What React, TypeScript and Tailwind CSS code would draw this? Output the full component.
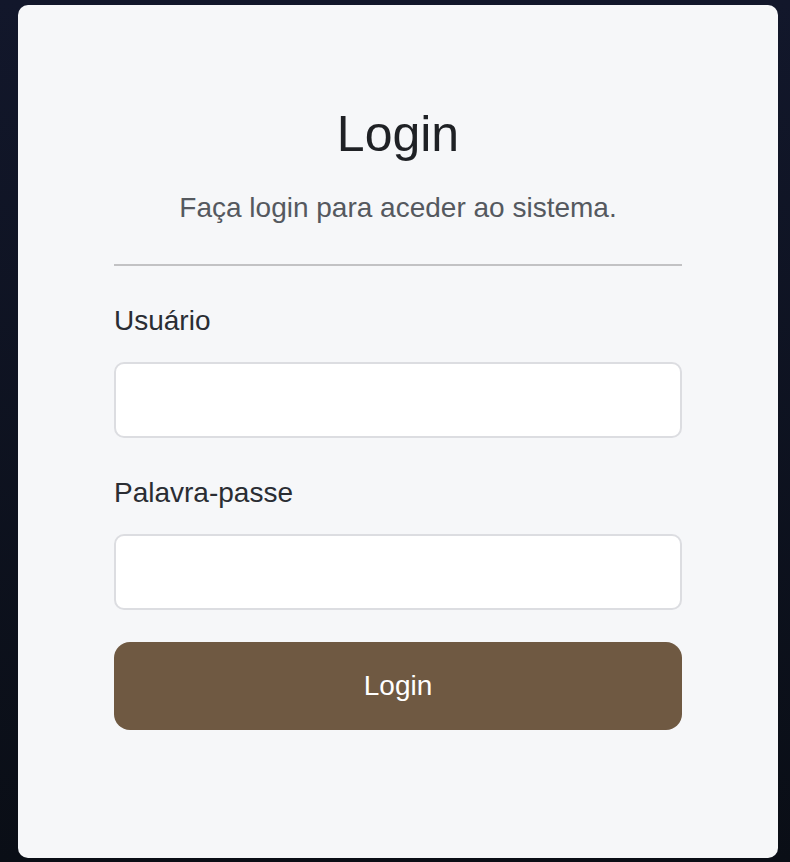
import React from 'react';

export default function App() {
  return (
    <div className="min-h-screen w-full bg-gradient-to-b from-[#12172b] to-[#0a0e16] pt-[5px] pb-[4px]">
      <div
        className="ml-[18px] w-[760px] h-[853px] rounded-[10px] bg-[#f6f7f9] px-[96px] pt-[104px]"
        style={{ fontFamily: '"Liberation Sans", Arial, sans-serif' }}
      >
        <h1 className="text-center text-[50px] leading-none text-[#1f2125]">Login</h1>
        <p className="mt-[35px] text-center text-[28px] leading-none text-[#55595f]">
          Faça login para aceder ao sistema.
        </p>
        <div className="mt-[42px] h-[2px] bg-[#c2c2c4]" />

        <form className="flex flex-col" onSubmit={(e) => e.preventDefault()}>
          <label className="mt-[41px] text-[28px] leading-none text-[#2a2d33]">Usuário</label>
          <input
            type="text"
            className="mt-[27px] h-[76px] w-full rounded-[10px] border-2 border-[#dcdde1] bg-white px-4 text-[24px] outline-none"
          />
          <label className="mt-[41px] text-[28px] leading-none text-[#2a2d33]">Palavra-passe</label>
          <input
            type="password"
            className="mt-[27px] h-[76px] w-full rounded-[10px] border-2 border-[#dcdde1] bg-white px-4 text-[24px] outline-none"
          />
          <button
            type="submit"
            className="mt-[32px] h-[88px] w-full rounded-[16px] bg-[#6f5942] text-[28px] text-white"
          >
            Login
          </button>
        </form>
      </div>
    </div>
  );
}
